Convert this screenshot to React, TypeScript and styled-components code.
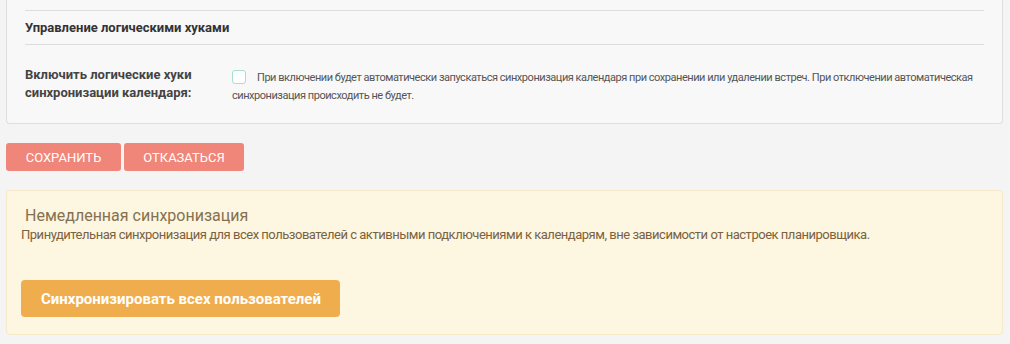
import styled, { createGlobalStyle } from 'styled-components';

const GlobalStyle = createGlobalStyle`
  body {
    margin: 0;
    background: #f4f4f4;
    font-family: Roboto, "Liberation Sans", sans-serif;
  }
`;

const Page = styled.div`
  padding: 0 7px 0 6px;
`;

const Panel = styled.div`
  background: #f8f8f8;
  border: 1px solid #dedede;
  border-top: none;
  border-radius: 0 0 4px 4px;
  padding: 10px 18px 18px 18px;
`;

const SectionTitle = styled.h4`
  margin: 0;
  padding: 8px 0;
  border-top: 1px solid #dddddd;
  border-bottom: 1px solid #dddddd;
  font-size: 13px;
  line-height: 17px;
  font-weight: 700;
  color: #333;
`;

const FormRow = styled.div`
  display: flex;
  margin-top: 21px;
`;

const Label = styled.label`
  flex: 0 0 207px;
  font-size: 13px;
  line-height: 18px;
  font-weight: 700;
  color: #444;
`;

const Help = styled.div`
  flex: 1;
  font-size: 11px;
  line-height: 18px;
  letter-spacing: -0.46px;
  color: #555;
  padding-top: 3px;
`;

const Check = styled.span`
  display: inline-block;
  width: 12px;
  height: 12px;
  border: 1px solid #a6e0d2;
  border-radius: 3px;
  background: #fff;
  vertical-align: -3px;
  margin-right: 11px;
`;

const Actions = styled.div`
  display: flex;
  gap: 3px;
  margin-top: 19px;
`;

const ActionButton = styled.button<{ $w: number }>`
  width: ${p => p.$w}px;
  height: 28px;
  border: none;
  border-radius: 3px;
  background: #f0857a;
  color: #fff;
  font-family: inherit;
  font-size: 13px;
  text-transform: uppercase;
  padding: 0;
`;

const Alert = styled.div`
  margin-top: 19px;
  background: #fdf6e1;
  border: 1px solid #f6e9c8;
  border-radius: 4px;
  padding: 15px 14px 17px 14px;
  height: 111px;
`;

const AlertTitle = styled.div`
  font-size: 16px;
  line-height: 20px;
  color: #85714f;
  padding-left: 4px;
`;

const AlertText = styled.div`
  font-size: 13px;
  line-height: 18px;
  letter-spacing: -0.48px;
  color: #7a6240;
`;

const SyncButton = styled.button`
  margin-top: 36px;
  height: 37px;
  padding: 0 19px 0 20px;
  border: none;
  border-radius: 4px;
  background: #f0ad4e;
  color: #fff;
  font-family: inherit;
  font-size: 15px;
  font-weight: 700;
`;

export default function App() {
  return (
    <Page>
      <GlobalStyle />
      <Panel>
        <SectionTitle>Управление логическими хуками</SectionTitle>
        <FormRow>
          <Label>
            Включить логические хуки
            <br />
            синхронизации календаря:
          </Label>
          <Help>
            <Check />
            При включении будет автоматически запускаться синхронизация календаря при сохранении или
            удалении встреч. При отключении автоматическая синхронизация происходить не будет.
          </Help>
        </FormRow>
      </Panel>
      <Actions>
        <ActionButton $w={115}>Сохранить</ActionButton>
        <ActionButton $w={120}>Отказаться</ActionButton>
      </Actions>
      <Alert>
        <AlertTitle>Немедленная синхронизация</AlertTitle>
        <AlertText>
          Принудительная синхронизация для всех пользователей с активными подключениями к календарям,
          вне зависимости от настроек планировщика.
        </AlertText>
        <SyncButton>Синхронизировать всех пользователей</SyncButton>
      </Alert>
    </Page>
  );
}
